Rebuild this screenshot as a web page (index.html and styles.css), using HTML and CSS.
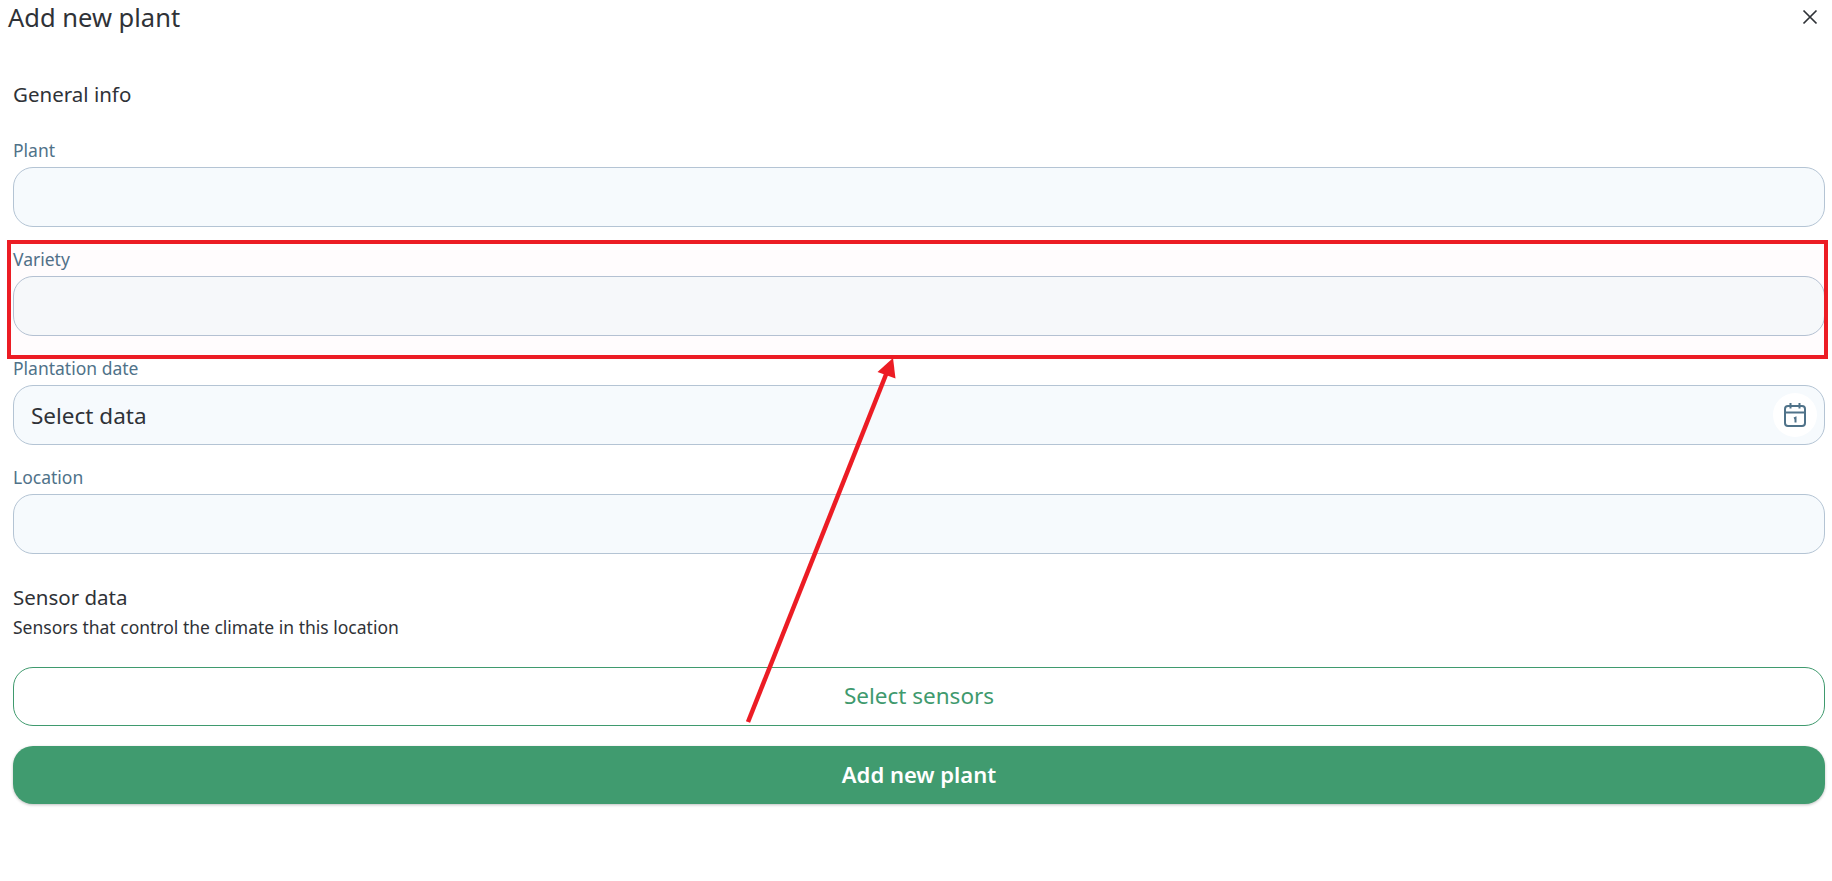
FILE: index.html
```html
<!DOCTYPE html>
<html lang="en">
<head>
  <meta charset="UTF-8">
  <meta name="viewport" content="width=device-width, initial-scale=1.0">
  <title>Add new plant</title>
  <link rel="stylesheet" href="styles.css">
</head>
<body>
  <div class="modal-header">
    <h1 class="modal-title">Add new plant</h1>
    <button class="close-button" type="button" aria-label="Close">
      <svg width="16" height="16" viewBox="0 0 16 16" fill="none" stroke="#2f3237" stroke-width="1.7">
        <path d="M1.5 1.5 14.5 14.5M14.5 1.5 1.5 14.5" />
      </svg>
    </button>
  </div>

  <form class="plant-form">
    <h2 class="section-title">General info</h2>

    <div class="field field-first">
      <label class="field-label">Plant</label>
      <div class="field-input"></div>
    </div>
    <div class="field">
      <label class="field-label">Variety</label>
      <div class="field-input field-input-hover"></div>
    </div>
    <div class="field">
      <label class="field-label">Plantation date</label>
      <div class="field-input field-input-date">
        <span>Select data</span>
        <span class="date-button">
          <svg width="24" height="26" viewBox="0 0 24 26" fill="none" stroke="#4f7289" stroke-width="2">
            <rect x="2" y="4" width="20" height="20" rx="3" />
            <path d="M2 10.5H22M7.500 1V6.500M16.500 1V6.500" />
            <path d="M11 16.500 12.500 15.800V20.500" />
          </svg>
        </span>
      </div>
    </div>
    <div class="field">
      <label class="field-label">Location</label>
      <div class="field-input"></div>
    </div>

    <h2 class="section-title section-sensor">Sensor data</h2>
    <p class="section-text">Sensors that control the climate in this location</p>

    <button class="sensor-button" type="button">Select sensors</button>
    <button class="submit-button" type="button">Add new plant</button>
  </form>

  <!-- Annotation drawn over the form -->
  <div class="note-box"></div>
  <svg class="note-arrow" width="1832" height="881" viewBox="0 0 1832 881">
    <path d="M748 722 887 372" stroke="#ec1c24" stroke-width="4.500" fill="none" />
    <path d="M893 358 877.500 372 895.500 378.500Z" fill="#ec1c24" />
  </svg>
</body>
</html>
```

FILE: styles.css
```css
* {
  box-sizing: border-box;
}
body {
  font-family: "Noto Sans", "Open Sans", sans-serif;
  margin: 0;
  height: 881px;
  overflow: hidden;
  background-color: #fff;
  color: #2f3237;
}
.modal-header {
  display: flex;
  justify-content: space-between;
  align-items: flex-start;
  height: 36px;
  padding: 0 14px 0 8px;
}
.modal-title {
  margin: 0;
  font-size: 25.5px;
  font-weight: 400;
  line-height: 34px;
}
.close-button {
  display: flex;
  padding: 0;
  margin-top: 9px;
  border: none;
  background: none;
}
.plant-form {
  padding: 45px 7px 0 13px;
}
.section-title {
  margin: 0;
  font-size: 20.5px;
  font-weight: 400;
  line-height: 26px;
}
.field {
  margin-top: 19px;
}
.field-first {
  margin-top: 30px;
}
.field-label {
  display: block;
  height: 30px;
  font-size: 17.5px;
  line-height: 26px;
  color: #4f7289;
}
.field-input {
  display: flex;
  align-items: center;
  justify-content: space-between;
  height: 60px;
  padding: 0 7px 0 17px;
  border: 1px solid #b4c4d4;
  border-radius: 20px;
  background-color: #f6fafd;
  font-size: 22.5px;
}
.field-input-hover {
  background-color: #f6fbfc;
}
.date-button {
  display: flex;
  align-items: center;
  justify-content: center;
  width: 44px;
  height: 44px;
  border-radius: 50%;
  background-color: #fff;
}
.section-sensor {
  margin-top: 30px;
}
.section-text {
  margin: 5px 0 0;
  font-size: 17.5px;
  line-height: 24px;
}
.sensor-button, .submit-button {
  display: block;
  width: 100%;
  font-family: inherit;
  border-radius: 20px;
  padding: 0 0 2px;
}
.sensor-button {
  height: 59px;
  margin-top: 28px;
  border: 1px solid #3f9a6e;
  background-color: #fff;
  color: #3f9a6e;
  font-size: 22.5px;
}
.submit-button {
  height: 58px;
  margin-top: 20px;
  border: none;
  background-color: #409b6f;
  color: #fff;
  font-size: 22px;
  font-weight: 600;
  box-shadow: 0 1px 3px rgba(0, 0, 0, 0.25);
}
.note-box {
  position: absolute;
  left: 7px;
  top: 240px;
  width: 1821px;
  height: 119px;
  border: 4px solid #ec1c24;
  background-color: rgba(255, 0, 60, 0.01);
}
.note-arrow {
  position: absolute;
  left: 0;
  top: 0;
}
```
